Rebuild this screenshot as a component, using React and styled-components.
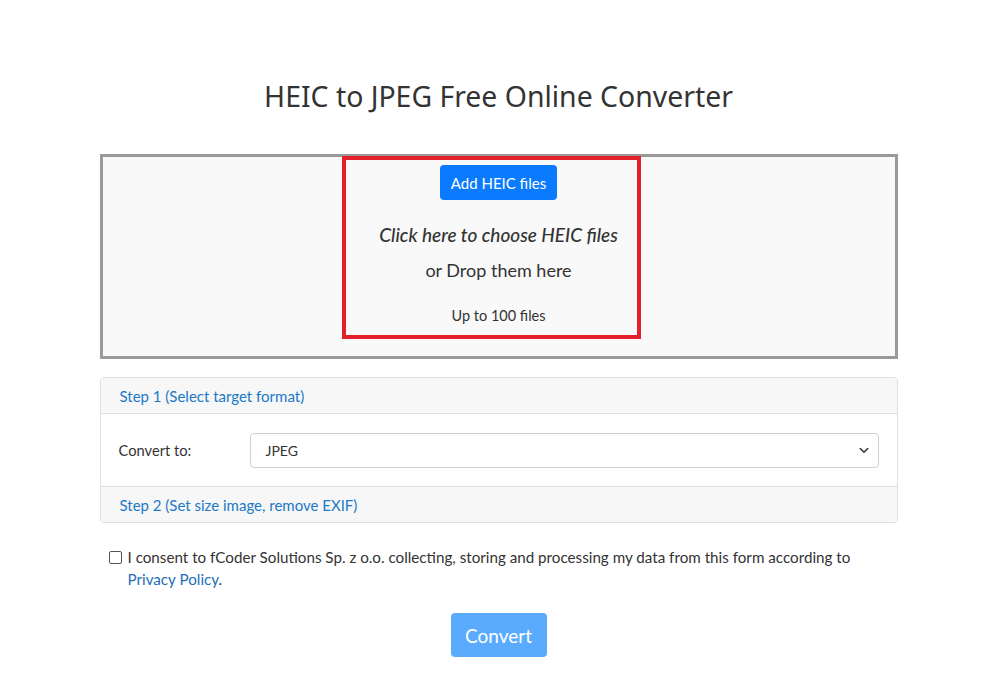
import React from 'react';
import styled, { createGlobalStyle } from 'styled-components';

const GlobalStyle = createGlobalStyle`
  html, body {
    margin: 0;
    padding: 0;
    background: #fff;
  }
  body {
    font-family: Lato, "Open Sans", sans-serif;
    color: #333;
  }
`;

const Page = styled.main`
  width: 798px;
  margin: 0 auto;
  padding-top: 78px;
  padding-left: 1px;
`;

const Title = styled.h1`
  margin: 0 0 40px;
  text-align: center;
  font-family: "Noto Sans", "Open Sans", sans-serif;
  font-weight: 400;
  font-size: 28.4px;
  line-height: 36px;
  color: #333;
`;

const DropZone = styled.section`
  position: relative;
  height: 191px;
  border: 3px solid #9a9a9a;
  background: #f9f9f9;
  display: flex;
  flex-direction: column;
  align-items: center;
  padding-top: 8px;
`;

// red annotation frame drawn over the drop zone
const Highlight = styled.div`
  position: absolute;
  left: 239px;
  top: -1px;
  width: 291px;
  height: 175px;
  border: 4px solid #e3202b;
  pointer-events: none;
`;

const AddButton = styled.button`
  border: 0;
  border-radius: 4px;
  background: #0a7bfe;
  color: #fff;
  font-family: Lato, sans-serif;
  font-size: 15px;
  width: 117px;
  height: 35px;
  cursor: pointer;
`;

const Hint = styled.p`
  margin: ${p => p.$top}px 0 0;
  font-size: ${p => p.$size}px;
  font-style: ${p => (p.$italic ? 'italic' : 'normal')};
  font-weight: ${p => p.$weight || 400};
  line-height: 22px;
  color: #333;
`;

const Card = styled.section`
  margin-top: 18px;
  border: 1px solid #dfdfdf;
  border-radius: 4px;
  overflow: hidden;
`;

const CardHeader = styled.div`
  height: 35px;
  display: flex;
  align-items: center;
  padding-left: 19px;
  background: #f7f7f7;
  border-top: ${p => (p.$first ? '0' : '1px solid #dfdfdf')};
  border-bottom: ${p => (p.$first ? '1px solid #dfdfdf' : '0')};
  color: #2079c7;
  font-size: 15px;
`;

const CardBody = styled.div`
  height: 72px;
  display: flex;
  align-items: center;
  padding: 0 18px;
  background: #fff;
`;

const Label = styled.label`
  width: 131px;
  font-size: 14.7px;
  color: #333;
`;

const Select = styled.div`
  flex: 1;
  height: 33px;
  border: 1px solid #cfcfcf;
  border-radius: 4px;
  display: flex;
  align-items: center;
  justify-content: space-between;
  padding: 0 8px 0 15px;
  font-size: 14px;
  color: #333;
  background: #fff;
`;

const Consent = styled.div`
  display: flex;
  align-items: flex-start;
  margin-top: 23px;
  padding-left: 9px;
  font-size: 15.2px;
  line-height: 22px;
  color: #333;
`;

const Box = styled.span`
  flex: none;
  width: 11px;
  height: 11px;
  margin: 5px 6px 0 0;
  border: 1px solid #555;
  border-radius: 2px;
  background: #fff;
`;

const Link = styled.a`
  color: #1e6fb8;
  text-decoration: none;
`;

const Actions = styled.div`
  display: flex;
  justify-content: center;
  margin-top: 23px;
`;

const ConvertButton = styled.button`
  width: 96px;
  height: 44px;
  border: 0;
  border-radius: 4px;
  background: #5aabfd;
  color: #fff;
  font-family: Lato, sans-serif;
  font-size: 19px;
`;

const Chevron = () => (
  <svg width="12" height="12" viewBox="0 0 16 16" fill="none">
    <path d="M3 6l5 5 5-5" stroke="#333" strokeWidth="2" strokeLinecap="round" strokeLinejoin="round" />
  </svg>
);

export default function App() {
  return (
    <>
      <GlobalStyle />
      <Page>
        <Title>HEIC to JPEG Free Online Converter</Title>
        <DropZone>
          <AddButton>Add HEIC files</AddButton>
          <Hint $top={24} $size={19} $italic $weight={500}>Click here to choose HEIC files</Hint>
          <Hint $top={13} $size={18}>or Drop them here</Hint>
          <Hint $top={24} $size={14.5}>Up to 100 files</Hint>
          <Highlight />
        </DropZone>
        <Card>
          <CardHeader $first>Step 1 (Select target format)</CardHeader>
          <CardBody>
            <Label>Convert to:</Label>
            <Select>
              <span>JPEG</span>
              <Chevron />
            </Select>
          </CardBody>
          <CardHeader>Step 2 (Set size image, remove EXIF)</CardHeader>
        </Card>
        <Consent>
          <Box />
          <span>
            I consent to fCoder Solutions Sp. z o.o. collecting, storing and processing my data from this form according to{' '}
            <Link href="#">Privacy Policy</Link>.
          </span>
        </Consent>
        <Actions>
          <ConvertButton>Convert</ConvertButton>
        </Actions>
      </Page>
    </>
  );
}
